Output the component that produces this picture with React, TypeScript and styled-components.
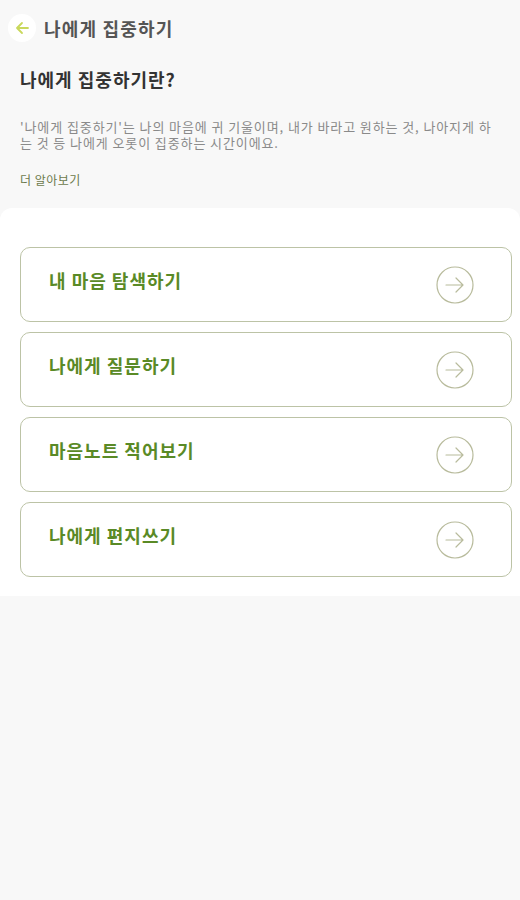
import React from 'react';
import styled, { createGlobalStyle } from 'styled-components';

const GlobalStyle = createGlobalStyle`
  html, body {
    margin: 0;
    padding: 0;
    background: #f8f8f8;
    font-family: 'Noto Sans CJK KR', 'Noto Sans', sans-serif;
  }
`;

const Page = styled.div`
  width: 520px;
  min-height: 900px;
  background: #f8f8f8;
`;

const Header = styled.header`
  display: flex;
  align-items: center;
  gap: 8px;
  height: 56px;
  padding: 0 8px;
`;

const BackButton = styled.button`
  width: 28px;
  height: 28px;
  border-radius: 50%;
  border: none;
  background: #ffffff;
  display: flex;
  align-items: center;
  justify-content: center;
  padding: 0;
`;

const HeaderTitle = styled.h1`
  margin: 0;
  font-size: 18px;
  font-weight: 700;
  color: #555555;
  letter-spacing: 1.2px;
`;

const Intro = styled.section`
  padding: 10px 20px 0;
`;

const IntroTitle = styled.h2`
  margin: 0;
  font-size: 18px;
  font-weight: 700;
  color: #333333;
  line-height: 26px;
  letter-spacing: 1px;
`;

const IntroText = styled.p`
  margin: 27px 0 0;
  font-size: 13px;
  line-height: 15.5px;
  color: #8a8a8a;
  letter-spacing: 0.9px;
  word-break: break-all;
`;

const MoreLink = styled.a`
  display: block;
  margin-top: 22px;
  font-size: 12px;
  line-height: 16px;
  color: #6c7a4c;
  letter-spacing: 0.5px;
`;

const Panel = styled.section`
  margin-top: 20px;
  background: #ffffff;
  border-radius: 12px 12px 0 0;
  padding: 39px 8px 19px 20px;
  display: flex;
  flex-direction: column;
  gap: 10px;
`;

const MenuCard = styled.div`
  height: 75px;
  box-sizing: border-box;
  border: 1px solid #bcc3a6;
  border-radius: 10px;
  display: flex;
  align-items: center;
  justify-content: space-between;
  padding: 0 37px 0 28px;
`;

const MenuLabel = styled.span`
  font-size: 18px;
  font-weight: 700;
  color: #5a8a26;
  letter-spacing: 1px;
  margin-top: -9px;
`;

const ArrowIcon = () => (
  <svg width="38" height="38" viewBox="0 0 38 38" fill="none">
    <circle cx="19" cy="19" r="18" stroke="#b8bb9c" strokeWidth="1.2" />
    <path d="M10 19h17M20 12l7 7-7 7" stroke="#b8bb9c" strokeWidth="1.2" strokeLinecap="round" strokeLinejoin="round" />
  </svg>
);

const BackArrow = () => (
  <svg width="16" height="16" viewBox="0 0 16 16" fill="none">
    <path d="M14 8H3M8 3L3 8l5 5" stroke="#c9d85c" strokeWidth="1.8" strokeLinecap="round" strokeLinejoin="round" />
  </svg>
);

const items = ['내 마음 탐색하기', '나에게 질문하기', '마음노트 적어보기', '나에게 편지쓰기'];

export default function App() {
  return (
    <Page>
      <GlobalStyle />
      <Header>
        <BackButton aria-label="뒤로">
          <BackArrow />
        </BackButton>
        <HeaderTitle>나에게 집중하기</HeaderTitle>
      </Header>
      <Intro>
        <IntroTitle>나에게 집중하기란?</IntroTitle>
        <IntroText>
          '나에게 집중하기'는 나의 마음에 귀 기울이며, 내가 바라고 원하는 것, 나아지게 하는 것 등 나에게 오롯이 집중하는 시간이에요.
        </IntroText>
        <MoreLink>더 알아보기</MoreLink>
      </Intro>
      <Panel>
        {items.map((label) => (
          <MenuCard key={label}>
            <MenuLabel>{label}</MenuLabel>
            <ArrowIcon />
          </MenuCard>
        ))}
      </Panel>
    </Page>
  );
}
